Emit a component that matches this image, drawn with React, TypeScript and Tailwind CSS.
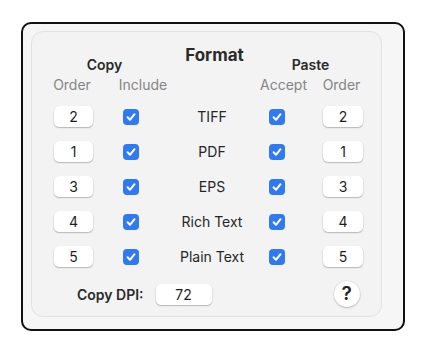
const ROWS = [
  { copy: "2", label: "TIFF", paste: "2" },
  { copy: "1", label: "PDF", paste: "1" },
  { copy: "3", label: "EPS", paste: "3" },
  { copy: "4", label: "Rich Text", paste: "4" },
  { copy: "5", label: "Plain Text", paste: "5" },
];

function Field({ value, className }: { value: string; className: string }) {
  return (
    <div
      className={`h-[21px] flex items-center justify-center rounded-[5px] bg-white text-[14px] text-[#1f1f1f] shadow-[0_0.5px_0_0.5px_rgba(0,0,0,0.08),0_1px_1.5px_rgba(0,0,0,0.18)] ${className}`}
    >
      {value}
    </div>
  );
}

function Check() {
  return (
    <div className="w-[16px] h-[16px] rounded-[4px] bg-[#3079f4] flex items-center justify-center shrink-0">
      <svg width="12" height="12" viewBox="0 0 12 12" fill="none">
        <path
          d="M2.6 6.3 L5 8.8 L9.5 3.2"
          stroke="white"
          strokeWidth="2"
          strokeLinecap="round"
          strokeLinejoin="round"
        />
      </svg>
    </div>
  );
}

export default function App() {
  return (
    <div className="w-[440px] h-[360px] bg-white pt-[22px] pl-[21px] font-['Inter',sans-serif]">
      <div className="w-[384px] h-[309px] rounded-[10px] border-2 border-[#111] bg-[#f6f6f6] pt-[7px] pl-[8px]">
        <div className="w-[351px] h-[286px] rounded-[12px] border border-[#e2e2e2] bg-[#f3f3f3] pt-[13px]">
          {/* header line 1 */}
          <div className="flex items-end h-[30px]">
            <div className="w-[145px] text-center text-[14px] font-semibold leading-[20px] text-[#2a2a2a]">
              Copy
            </div>
            <div className="w-[75px] text-center text-[17px] font-bold leading-[20px] text-[#2a2a2a] mb-[10px]">
              Format
            </div>
            <div className="w-[117px] text-center text-[14px] font-semibold leading-[20px] text-[#2a2a2a]">
              Paste
            </div>
          </div>
          {/* header line 2 */}
          <div className="flex h-[20px] text-[14px] leading-[20px] text-[#858585]">
            <div className="w-[80px] text-center">Order</div>
            <div className="w-[62px] text-center">Include</div>
            <div className="w-[72px]" />
            <div className="w-[75px] text-center">Accept</div>
            <div className="w-[41px] text-center">Order</div>
          </div>
          <div className="mt-[4px]">
            {ROWS.map((r) => (
              <div key={r.label} className="flex items-center h-[35px]">
                <Field value={r.copy} className="ml-[22px] w-[39px]" />
                <div className="ml-[30px]">
                  <Check />
                </div>
                <div className="w-[130px] pl-[16px] text-center text-[14px] text-[#262626]">
                  {r.label}
                </div>
                <Check />
                <Field value={r.paste} className="ml-[38px] w-[40px]" />
              </div>
            ))}
          </div>
          <div className="flex items-center h-[26px] mt-[7px]">
            <div className="ml-[45px] text-[14px] font-semibold text-[#2a2a2a]">
              Copy DPI:
            </div>
            <Field value="72" className="ml-[12px] w-[56px]" />
            <div className="ml-[122px] w-[26px] h-[26px] rounded-full bg-white flex items-center justify-center text-[19px] font-semibold text-[#222] shadow-[0_0_0_0.5px_rgba(0,0,0,0.1),0_1px_2px_rgba(0,0,0,0.2)]">
              ?
            </div>
          </div>
        </div>
      </div>
    </div>
  );
}
